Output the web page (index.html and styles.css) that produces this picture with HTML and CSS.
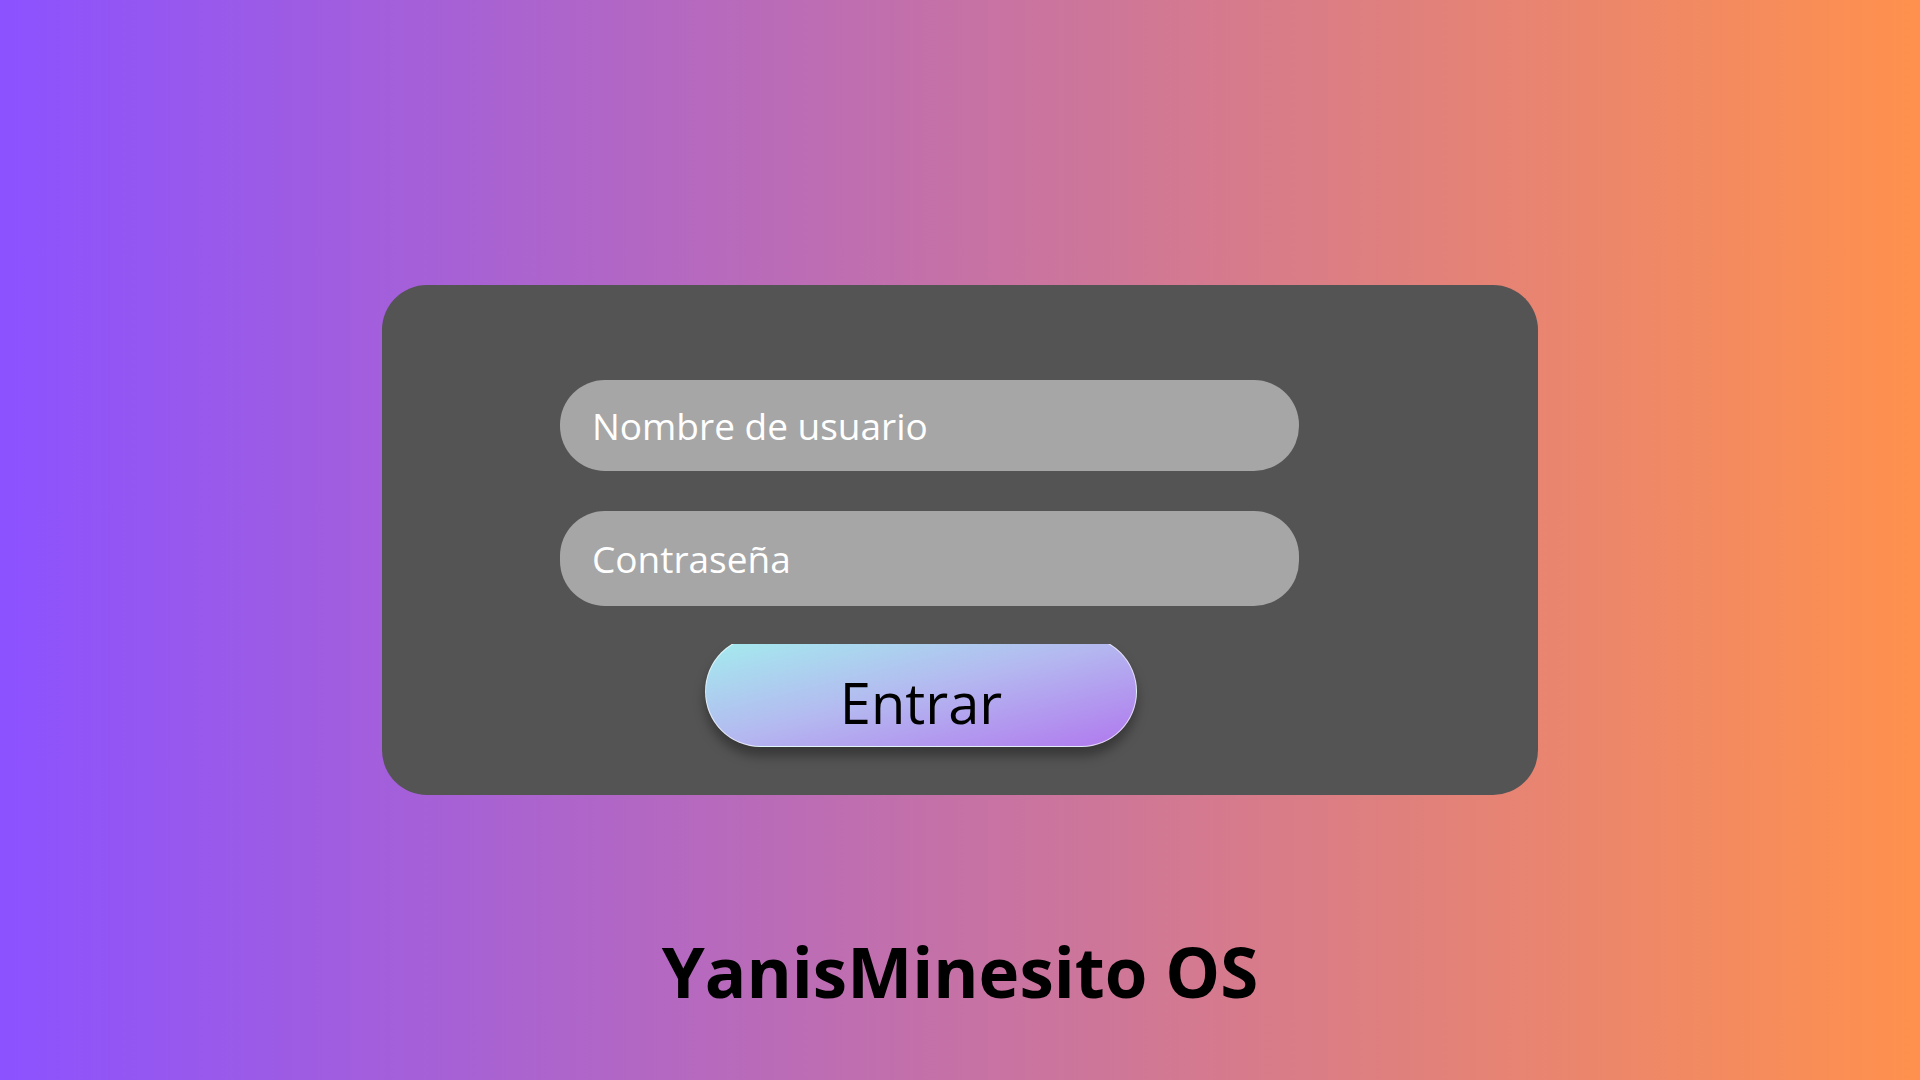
FILE: index.html
```html
<!DOCTYPE html>
<html lang="es">
<head>
<meta charset="utf-8">
<title>YanisMinesito OS</title>
<link rel="stylesheet" href="styles.css">
</head>
<body>
<main class="screen">
  <form class="card">
    <input class="field field-user" type="text" placeholder="Nombre de usuario">
    <input class="field field-pass" type="password" placeholder="Contraseña">
    <button class="enter" type="button">Entrar</button>
  </form>
  <h1 class="brand">YanisMinesito OS</h1>
</main>
</body>
</html>
```

FILE: styles.css
```css
html, body {
  margin: 0;
  padding: 0;
}

body {
  width: 1920px;
  height: 1080px;
  overflow: hidden;
  background: linear-gradient(to right, #8c52ff 0%, #ff914d 100%);
  font-family: "Open Sans", "Noto Sans", sans-serif;
}

.screen {
  display: flex;
  flex-direction: column;
  align-items: center;
  padding-top: 285px;
}

.card {
  box-sizing: border-box;
  width: 1156px;
  height: 510px;
  background: #545454;
  border-radius: 45px;
  padding: 95px 0 0 178px;
  display: flex;
  flex-direction: column;
  align-items: flex-start;
}

.field {
  box-sizing: border-box;
  width: 739px;
  border: none;
  outline: none;
  background: #a6a6a6;
  border-radius: 45px;
  padding: 0 0 0 32px;
  font-family: "Open Sans", "Noto Sans", sans-serif;
  font-size: 37px;
  color: #ffffff;
}

.field::placeholder {
  color: #ffffff;
  opacity: 1;
}

.field-user {
  height: 91px;
}

.field-pass {
  height: 95px;
  margin-top: 40px;
}

.enter {
  box-sizing: border-box;
  width: 432px;
  height: 111px;
  margin: 30px 0 0 145px;
  padding: 20px 0 0 0;
  border: 1.5px solid rgba(255, 255, 255, 0.65);
  border-radius: 56px;
  background: linear-gradient(to bottom right, #a3eeee 0%, #b4b8f0 50%, #b078ee 100%);
  box-shadow: 0 9px 12px rgba(0, 0, 0, 0.35);
  clip-path: inset(8px -40px -40px -40px);
  font-family: "Open Sans", "Noto Sans", sans-serif;
  font-size: 56px;
  line-height: 76px;
  color: #000000;
  text-align: center;
  cursor: pointer;
}

.brand {
  margin: 129px 0 0 0;
  font-family: "Open Sans", "Noto Sans", sans-serif;
  font-weight: 700;
  font-size: 69px;
  line-height: normal;
  color: #000000;
  text-align: center;
}
```
